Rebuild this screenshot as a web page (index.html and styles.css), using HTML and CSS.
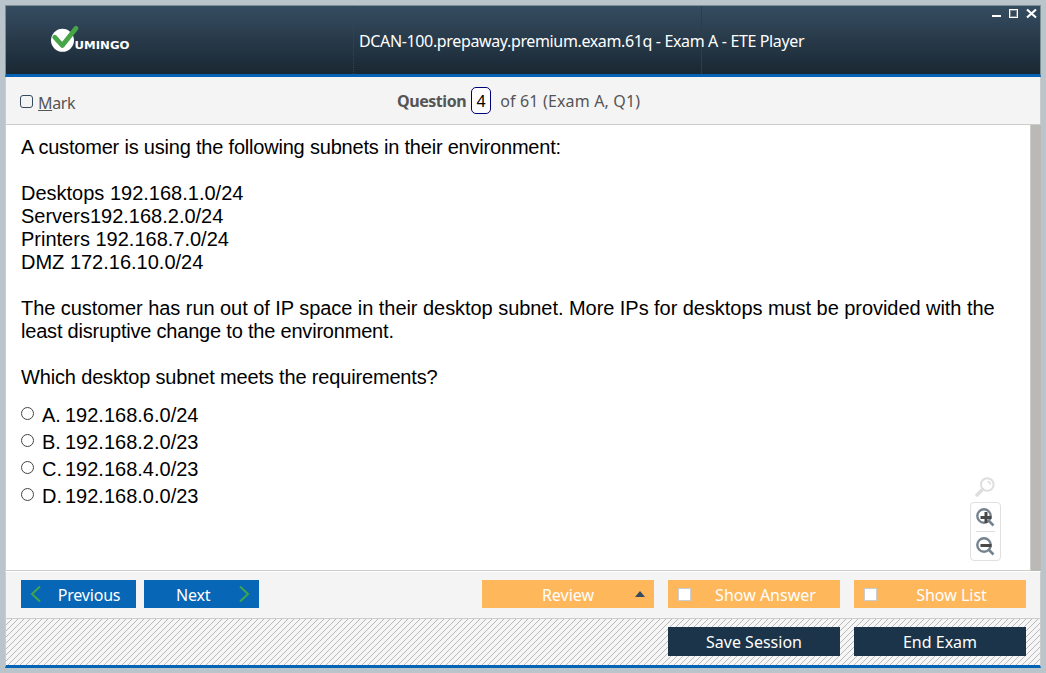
FILE: index.html
```html
<!DOCTYPE html>
<html lang="en"><head><meta charset="utf-8"><title>ETE Player</title><link rel="stylesheet" href="styles.css"></head>
<body>
<div class="window">
<header class="titlebar">
<div class="brand"><svg width="82" height="30" viewBox="0 0 82 30"><circle cx="12.500" cy="16.300" r="11.500" fill="#fff"/><path d="M4.700 13.200 12.300 21.500 26 4.300" fill="none" stroke="#47a447" stroke-width="4.800" stroke-linecap="round" stroke-linejoin="round"/><text x="24.500" y="25" class="brand-text" textLength="55" lengthAdjust="spacingAndGlyphs">UMINGO</text></svg></div>
<div class="title"><span class="title-text">DCAN-100.prepaway.premium.exam.61q - Exam A - ETE Player</span></div>
<div class="controls"><svg width="48" height="12" viewBox="0 0 48 12"><path d="M1 8h9" stroke="#fff" stroke-width="2"/><rect x="18.500" y="1.500" width="8" height="8" fill="none" stroke="#fff"/><rect x="19.500" y="2.500" width="6" height="6" fill="none" stroke="#80858a"/><path d="M36 1.500 45 9.500M45 1.500 36 9.500" stroke="#fff" stroke-width="2.200"/></svg></div>
</header>
<div class="toolbar">
<div class="mark"><span class="checkbox"></span><span class="mark-text"><u>M</u>ark</span></div>
<div class="counter"><b class="q-label">Question</b><span class="number">4</span><span class="q-total">of 61 (Exam A, Q1)</span></div>
</div>
<main class="main">
<div class="content">
<div class="question">
<p class="tight">A customer is using the following subnets in their environment:</p>
<p>Desktops 192.168.1.0/24<br>Servers192.168.2.0/24<br>Printers 192.168.7.0/24<br>DMZ 172.16.10.0/24</p>
<p><span class="long">The customer has run out of IP space in their desktop subnet. More IPs for desktops must be provided with the</span><br><span class="tight">least disruptive change to the environment.</span></p>
<p class="ask">Which desktop subnet meets the requirements?</p>
</div>
<ul class="answers">
<li><i class="radio"></i><span class="letter">A.</span><span>192.168.6.0/24</span></li>
<li><i class="radio"></i><span class="letter">B.</span><span>192.168.2.0/23</span></li>
<li><i class="radio"></i><span class="letter">C.</span><span>192.168.4.0/23</span></li>
<li><i class="radio"></i><span class="letter">D.</span><span>192.168.0.0/23</span></li>
</ul>
<div class="zoom">
<svg class="reset" width="20" height="20" viewBox="0 0 20 20" fill="none" stroke="#dedede"><circle cx="12.300" cy="7.500" r="6.300" stroke-width="2"/><path d="M12.500 4.500q2.500.3 3 3" stroke-width="1.500"/><path d="M7.500 12.500 2 18" stroke-width="3.500" stroke-linecap="round"/></svg>
<div class="zoom-box">
<svg width="19" height="19" viewBox="0 0 19 19" fill="none"><circle cx="8" cy="8" r="6.700" stroke="#74828e" stroke-width="2.400"/><path d="M12.500 12.500 17.500 17.500" stroke="#74828e" stroke-width="2.500"/><path d="M4.500 9.500h11M10 4v11" stroke="#484848" stroke-width="3"/></svg>
<span class="rule"></span>
<svg width="19" height="19" viewBox="0 0 19 19" fill="none"><circle cx="8" cy="8" r="6.700" stroke="#74828e" stroke-width="2.400"/><path d="M12.500 12.500 17.500 17.500" stroke="#74828e" stroke-width="2.500"/><path d="M4.500 8.500h11" stroke="#484848" stroke-width="3"/></svg>
</div></div>
</div>
<div class="scrollbar"></div>
</main>
<div class="actions">
<div class="btn nav"><svg class="chev-left" width="12" height="18" viewBox="0 0 12 18"><path d="M10 1.500 2 9l8 7.500" fill="none" stroke="#3fa64b" stroke-width="2"/></svg><span class="t-prev">Previous</span></div>
<div class="btn nav next"><span class="t-next">Next</span><svg class="chev-right" width="12" height="18" viewBox="0 0 12 18"><path d="m2 1.500 8 7.500-8 7.500" fill="none" stroke="#3fa64b" stroke-width="2"/></svg></div>
<div class="btn amber review"><span class="t-review">Review</span><svg class="arrow" width="10" height="6" viewBox="0 0 10 6"><path d="M0 6 5 0l5 6z" fill="#34495e"/></svg></div>
<div class="btn amber check"><i class="box"></i><span class="t-answer">Show Answer</span></div>
<div class="btn amber check"><i class="box"></i><span class="t-list">Show List</span></div>
</div>
<footer class="footer">
<svg class="hatch" width="1034" height="46"><defs><pattern id="hatch" width="6" height="6" patternUnits="userSpaceOnUse"><rect width="6" height="6" fill="#f6f6f6"/><path d="M5 0h1v1h-1zM4 1h1v1h-1zM3 2h1v1h-1zM2 3h1v1h-1zM1 4h1v1h-1zM0 5h1v1h-1z" fill="#b8b8b8" shape-rendering="crispEdges"/></pattern></defs><rect width="1034" height="46" fill="url(#hatch)"/></svg>
<div class="btn dark"><span class="t-save">Save Session</span></div><div class="btn dark"><span class="t-end">End Exam</span></div>
</footer>
</div>
</body></html>
```
FILE: styles.css
```css
*{box-sizing:border-box}
body{margin:0;width:1046px;height:673px;padding:5px;background:#b9c5cb;font-family:"Noto Sans","Open Sans",sans-serif;font-size:16px;overflow:hidden}
.window{width:1036px;height:663px;display:flex;flex-direction:column;background:#f4f4f4}
.titlebar{height:72px;border:1px solid #7e8e95;border-bottom:3px solid #0563b5;background:linear-gradient(#354d61,#1a2733);display:flex;color:#fff}
.brand{width:347px;padding:18px 0 0 44px}
.brand svg{display:block}
.brand-text{font:bold 9.8px "DejaVu Sans",sans-serif;fill:#fff}
.title{width:349px;border-left:1px dotted #30436f;border-right:1px solid #2b3d4e;padding:22px 0 0 5px;line-height:26px;white-space:nowrap}
.title-text{letter-spacing:-.36px}
.controls{flex:1;display:flex;justify-content:flex-end;padding:2px 1px 0 0}
.toolbar{height:48px;border:1px solid #ccc;border-top:0;display:flex;color:#555;line-height:26px}
.mark{width:391px;display:flex;padding:13px 0 0 14px}
.mark-text{letter-spacing:-.4px}
.checkbox{width:13px;height:13px;border:1px solid #34495e;border-radius:3px;margin:5px 5px 0 0}
.counter{display:flex;padding-top:11px;white-space:nowrap}
.q-label{letter-spacing:-.45px}
.q-total{letter-spacing:.16px}
.number{width:20px;height:27px;margin:-1px 9px 0 5px;border:1px solid #00007b;border-radius:5px;background:#fff;color:#000;text-align:center}
.main{height:446px;display:flex}
.content{position:relative;width:1026px;background:#fff;border:1px solid #ccc;border-top:0;padding:11px 0 0 15px;font:20px/23px "Liberation Sans",Arial,sans-serif;color:#000}
.scrollbar{width:10px;background:#bbb9b5}
.question p{margin:0 0 23px;white-space:nowrap}
.tight{letter-spacing:-.2px}
.long{letter-spacing:-.05px}
.ask{letter-spacing:-.16px}
.answers{list-style:none;margin:-11px 0 0;padding:0}
.answers li{height:27px;display:flex;align-items:center;padding-top:1px}
.radio{width:13px;height:13px;border:1px solid #444;border-radius:50%;margin:-4px 8px 0 0}
.letter{width:23px}
.zoom{position:absolute;left:964px;top:352px;display:flex;flex-direction:column}
.reset{margin-left:5px}
.zoom-box{width:31px;height:59px;margin-top:5px;border:1px solid #e0e0e0;border-radius:4px;display:flex;flex-direction:column;align-items:center;padding-top:5px}
.rule{width:19px;height:1px;background:#ddd;margin:4px 0 5px}
.actions{height:48px;border:1px solid #ccc;border-top:1px solid #fff;display:flex;padding:8px 14px 0 15px}
.btn{position:relative;height:28px;color:#fff;line-height:31px;display:flex;justify-content:center;white-space:nowrap}
.nav{width:115px;background:#0866b6;margin-right:8px}
.t-prev{letter-spacing:-.2px}
.chev-left{margin:5px 16px 0 -7px}
.next{justify-content:flex-start;padding-left:32px;margin-right:223px}
.t-next{letter-spacing:-.2px}
.chev-right{margin:5px 0 0 28px}
.amber{width:172px;background:#ffb75c;margin-right:14px}
.amber:last-child{margin-right:0}
.arrow{position:absolute;right:9px;top:11px}
.check{justify-content:flex-start;padding-left:10px}
.box{width:13px;height:13px;margin:8px 0 0;border:1px solid #ccc;background:#fff}
.check span{flex:1;text-align:center}
.footer{position:relative;height:49px;border-left:1px solid #ccc;border-right:1px solid #ccc;border-bottom:3px solid #0563b5;display:flex;justify-content:flex-end;gap:14px;padding:8px 14px 0}
.hatch{position:absolute;left:0;top:0}
.dark{width:172px;height:29px;line-height:30px;background:#1b344a}
```
